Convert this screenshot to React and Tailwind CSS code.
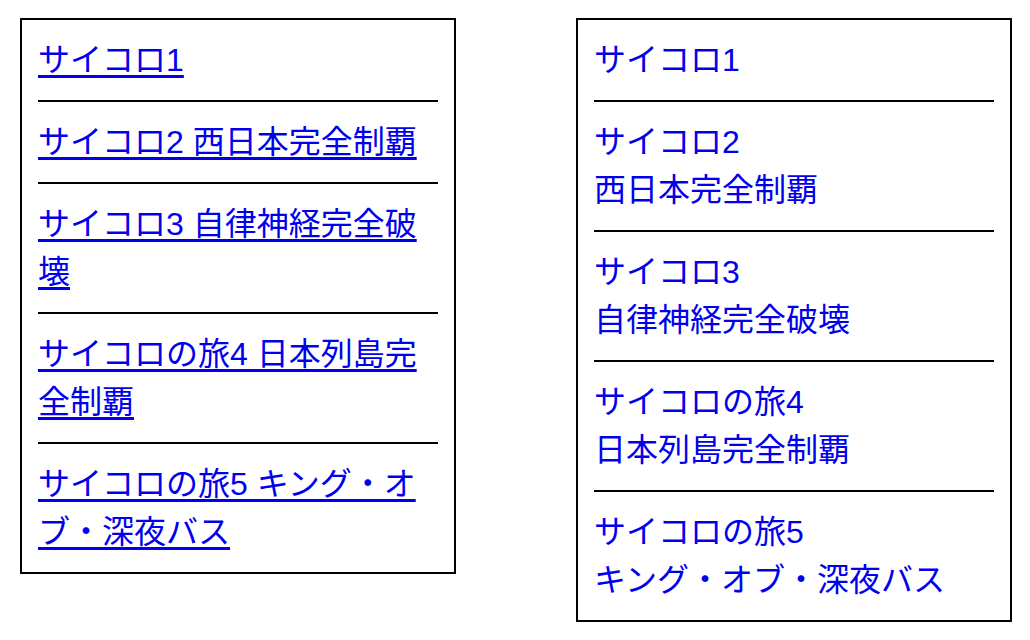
const items = [
  ["サイコロ1", ""],
  ["サイコロ2", "西日本完全制覇"],
  ["サイコロ3", "自律神経完全破壊"],
  ["サイコロの旅4", "日本列島完全制覇"],
  ["サイコロの旅5", "キング・オブ・深夜バス"],
];

const font = { fontFamily: '"Liberation Sans", "Noto Sans CJK JP", sans-serif' };

function InlineList() {
  return (
    <ul className="w-[436px] border-2 border-black px-4">
      {items.map(([t, s], i) => (
        <li
          key={i}
          className={`pt-[16px] pb-[16px] ${i < items.length - 1 ? "border-b-2 border-black" : ""}`}
        >
          <a href="#" className="text-[#0000ee] underline underline-offset-[4px]">
            {s ? `${t} ${s}` : t}
          </a>
        </li>
      ))}
    </ul>
  );
}

function StackedList() {
  return (
    <ul className="w-[436px] border-2 border-black px-4">
      {items.map(([t, s], i) => (
        <li
          key={i}
          className={`pt-[16px] pb-[16px] ${i < items.length - 1 ? "border-b-2 border-black" : ""}`}
        >
          <a href="#" className="block text-[#0000ee]">
            <span className="block">{t}</span>
            {s && <span className="block">{s}</span>}
          </a>
        </li>
      ))}
    </ul>
  );
}

export default function App() {
  return (
    <div
      className="flex items-start gap-[120px] bg-white pl-5 pt-[18px] min-h-[640px] text-[32px] leading-[48px]"
      style={font}
    >
      <InlineList />
      <StackedList />
    </div>
  );
}
